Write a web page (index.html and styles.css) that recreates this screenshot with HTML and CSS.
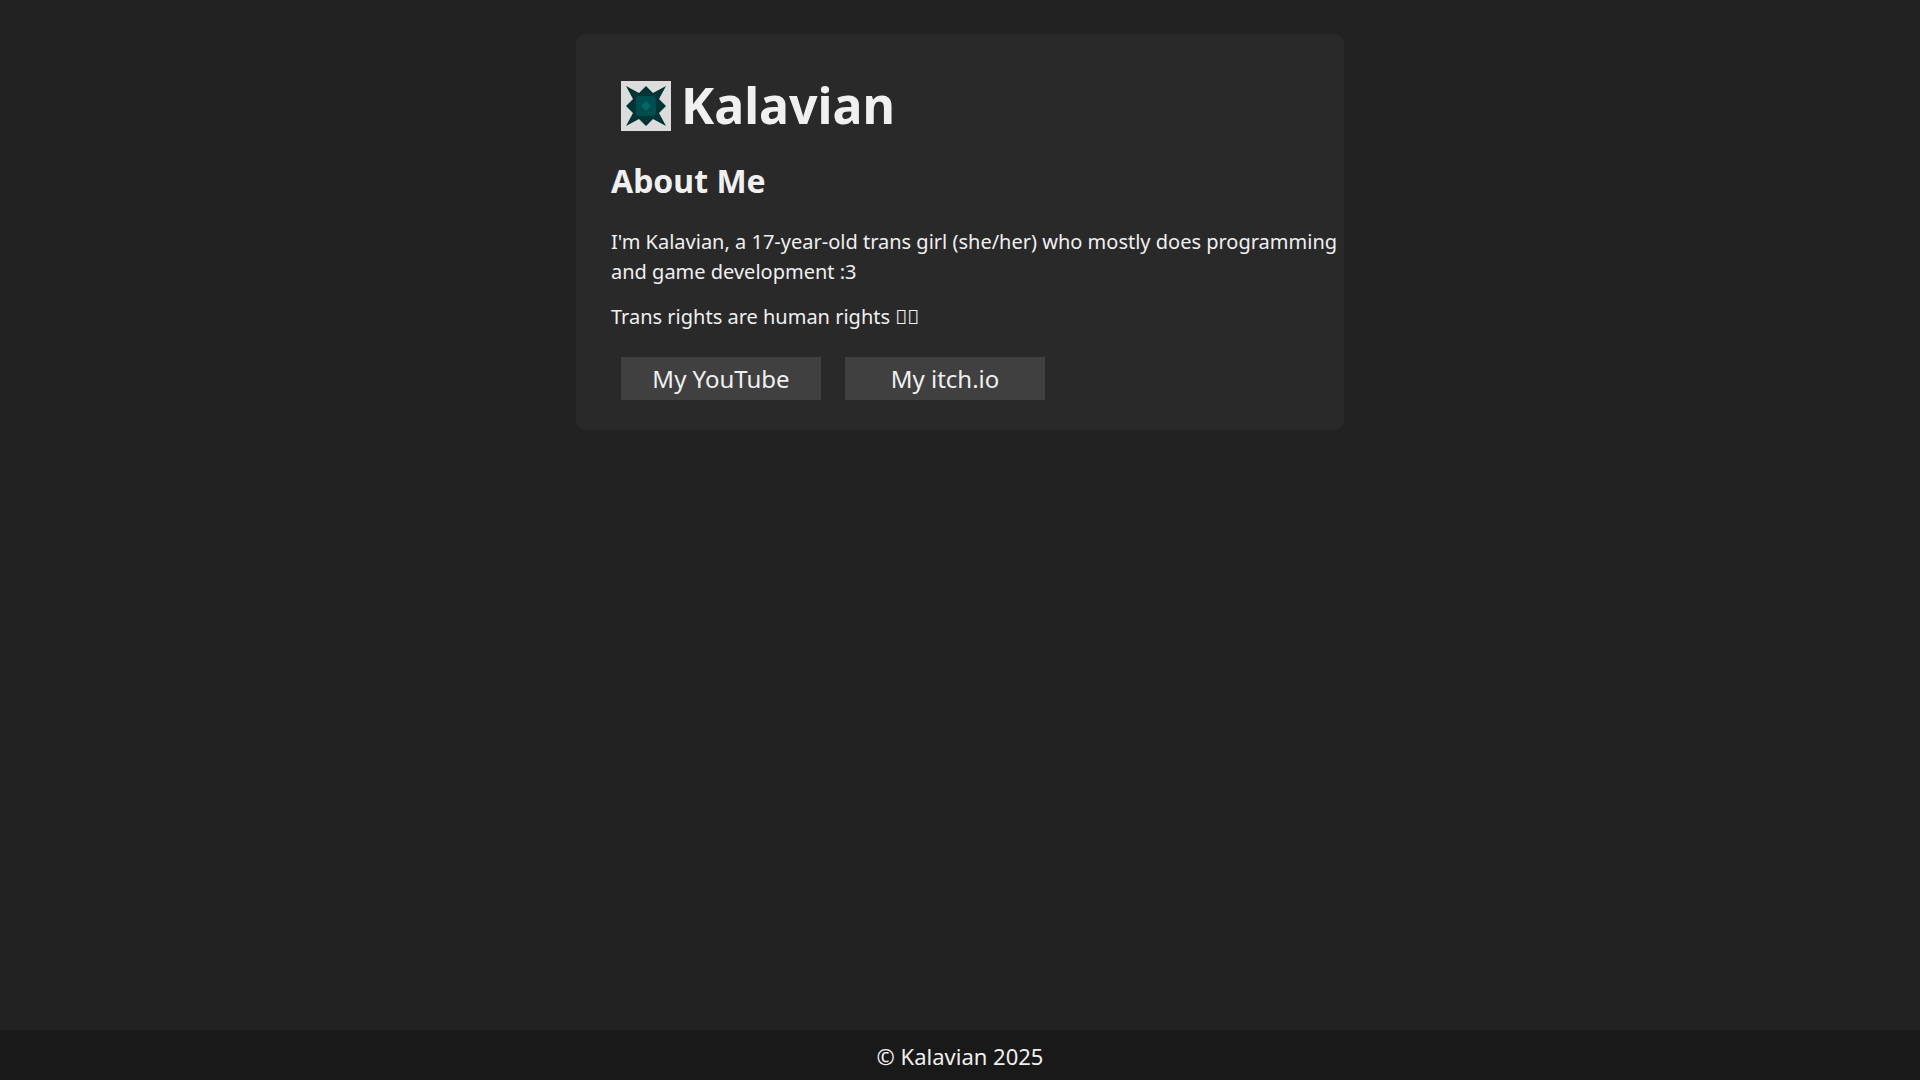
FILE: index.html
```html
<!DOCTYPE html>
<html lang="en">
<head>
    <meta charset="UTF-8">
    <meta name="viewport" content="width=device-width, initial-scale=1.0">
    <title>Kalavian</title>
    <link rel="stylesheet" href="styles.css">
</head>
<body>
    <main class="content">
        <header class="title">
            <svg class="logo" viewBox="0 0 50 50" aria-hidden="true">
                <rect width="50" height="50" fill="#dcdcdc"/>
                <path d="M5 5L18 12L25 5L32 12L45 5L38 18L45 25L38 32L45 45L32 38L25 45L18 38L5 45L12 32L5 25L12 18Z" fill="#003333"/>
                <path d="M17 15H33L35 17V33L33 35H17L15 33V17Z" fill="#004d4d"/>
                <path d="M25 20L30 25L25 30L20 25Z" fill="#006666"/>
            </svg>
            <h1>Kalavian</h1>
        </header>

        <h2>About Me</h2>
        <p>I'm Kalavian, a 17-year-old trans girl (she/her) who mostly does programming and game development :3</p>
        <p>Trans rights are human rights &#xE000;&#xE000;</p>

        <nav class="links">
            <a href="#youtube" class="link-button">My YouTube</a>
            <a href="#itch" class="link-button">My itch.io</a>
        </nav>
    </main>

    <footer>© Kalavian 2025</footer>
</body>
</html>
```
FILE: styles.css
```css
* {
    box-sizing: border-box;
}

body {
    display: flex;
    flex-direction: column;
    align-items: center;
    min-height: 100vh;
    margin: 0;
    background-color: #222;
    color: #f0f0f0;
    font-family: "Noto Sans", sans-serif;
    font-size: 20px;
    line-height: 30px;
}

.content {
    width: 40%;
    margin: 34px 0;
    padding: 37px 0 30px 35px;
    background-color: #292929;
    border-radius: 10px;
}

.title {
    display: flex;
    align-items: center;
    gap: 10px;
    padding-left: 10px;
}

.logo {
    width: 50px;
    height: 50px;
}

h1 {
    margin: 0;
    font-size: 50px;
    line-height: 69px;
}

h2 {
    margin: 17px 0 22px;
    font-size: 32px;
    line-height: 48px;
}

p {
    margin: 0 0 15px;
}

.links {
    display: flex;
    flex-wrap: wrap;
    gap: 24px;
    margin-top: 25px;
    padding-left: 10px;
}

.link-button {
    width: 200px;
    padding: 5px;
    background-color: #404040;
    color: #f0f0f0;
    font-size: 24px;
    line-height: 33px;
    text-align: center;
    text-decoration: none;
}

.link-button:hover {
    background-color: #505050;
}

footer {
    width: 100%;
    margin-top: auto;
    padding: 11px 10px 9px;
    background-color: #191919;
    font-size: 22px;
    text-align: center;
}
```
